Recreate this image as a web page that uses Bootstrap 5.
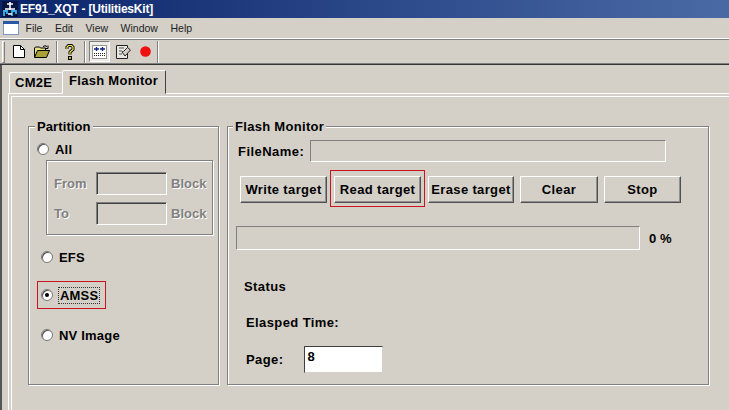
<!DOCTYPE html>
<html lang="en">
<head>
<meta charset="UTF-8">
<title>EF91_XQT - [UtilitiesKit]</title>
<link href="https://cdn.jsdelivr.net/npm/bootstrap@5.3.0/dist/css/bootstrap.min.css" rel="stylesheet">
<style>
html, body { margin: 0; height: 410px; overflow: hidden; background: #d4d0c8; }
body { font-family: "Liberation Sans", Arial, sans-serif; font-size: 12px; color: #000; line-height: 1; }
.win-title { height: 18px; background: linear-gradient(90deg, #0a246a, #4a6aa5); color: #fff; font-weight: 700; font-size: 12px; letter-spacing: -.2px; padding-left: 2px; gap: 2px; }
.win-menu { height: 20px; padding-left: 2px; gap: 12.5px; }
.win-menu span { font-size: 10.500px; color: #222; }
.win-menu svg { margin-right: -7px; }
.win-tools { height: 27px; border-top: 1px solid #fff; border-bottom: 1px solid #333; box-shadow: inset 0 1px 0 #808080, inset 0 -1px 0 #808080; padding-left: 2px; }
.tool-btn { width: 22px; height: 21px; }
.tool-w23 { width: 23px; }
.tool-btn.on { width: 21px; background-color: #eeece8; background-image: radial-gradient(#d4d0c8 35%, transparent 40%); background-size: 2px 2px; border: 1px solid; border-color: #808080 #fff #fff #808080; margin-right: 2px; }
.tool-sep { width: 2px; height: 22px; border-left: 1px solid #808080; border-right: 1px solid #fff; margin-left: 3px; }
.tool-gap { margin-right: 3px; }
.tool-end { margin-left: 1px; }
.tool-grip { width: 3px; height: 22px; border: 1px solid; border-color: #fff #808080 #808080 #fff; margin-right: 3px; }
.win-client { height: 345px; border-left: 2px solid #555; padding: 5px 0 0 6px; }
.tab-strip { height: 23px; padding-left: 1px; }
.tab-item { font-weight: 700; font-size: 13px; letter-spacing: .3px; background: #d4d0c8; border: 1px solid; border-color: #fff #404040 transparent #fff; border-radius: 2px 2px 0 0; padding: 0 5px; }
.tab-back { height: 21px; width: 53px; border-right: 0; }
.tab-front { height: 24px; width: 104px; padding: 0 6px 3px; position: relative; z-index: 1; margin-bottom: -1px; }
.tab-page { height: 320px; margin-right: -10px; border: 1px solid; border-color: #fff #808080 #808080 #fff; padding: 32px 0 0 19px; gap: 8px; box-shadow: inset 2px 2px 0 #d4d0c8, inset 3px 3px 0 #fff; }
.etched { border: 1px solid #808080; box-shadow: 1px 1px 0 #fff, inset 1px 1px 0 #fff; position: relative; }
.etched > .etch-title { position: absolute; top: -7px; left: 6px; background: #d4d0c8; padding: 0 2px; font-weight: 700; font-size: 13px; letter-spacing: .1px; }
.flash-box > .etch-title { left: 5px; letter-spacing: .3px; }
.part-box { width: 191px; height: 259px; padding: 14px 0 0 8px; }
.flash-box { width: 482px; height: 259px; padding: 13px 0 0 8px; }
.radio-row { gap: 6px; font-weight: 700; font-size: 13px; height: 16px; letter-spacing: .2px; }
.win-radio { width: 12px; height: 12px; border-radius: 50%; background: #fff; border: 1px solid #777; box-shadow: inset 1px 1px 0 #555; position: relative; flex: none; }
.win-radio.sel::after { content: ""; position: absolute; left: 3px; top: 3px; width: 4px; height: 4px; background: #000; border-radius: 50%; }
.range-box { width: 167px; height: 75px; margin: 3px 0 14px 9px; padding: 11px 0 0 7px; gap: 7px; }
.range-row { gap: 4px; font-weight: 700; font-size: 13px; color: #808080; text-shadow: 1px 1px 0 #fff; }
.range-row label { width: 38px; margin: 0; }
.sunk { border: 1px solid; border-color: #808080 #fff #fff #808080; background: #d4d0c8; }
.range-input { width: 71px; height: 23px; box-shadow: inset 1px 1px 0 #404040; }
.amss-mark { width: 69px; height: 28px; margin: 16px 0 18px 0; padding-left: 3px; border: 1px solid #c8141c; }
.amss-mark .focus-txt { outline: 1px dotted #333; padding: 1px; }
.file-row { gap: 6px; font-weight: 700; font-size: 13px; padding-left: 2px; height: 22px; letter-spacing: .45px; }
.file-input { width: 356px; height: 22px; }
.btn-row { margin: 14px 0 0 4px; gap: 6px; align-items: flex-start; }
.win-btn { height: 27px; width: 87px; display: flex; align-items: center; justify-content: center; font-weight: 700; font-size: 13px; letter-spacing: .35px; background: #d4d0c8; border: 1px solid; border-color: #fff #505050 #505050 #fff; box-shadow: inset -1px -1px 0 #909090; flex: none; }
.read-mark { border: 1px solid #c8141c; padding: 5px 3px 3px; margin: -6px -3px -4px; width: 95px; height: 37px; flex: none; }
.w86 { width: 86px; }
.w78 { width: 78px; }
.w77 { width: 77px; }
.prog-row { margin-top: 23px; gap: 9px; font-weight: 700; font-size: 13px; letter-spacing: .1px; }
.prog-track { width: 404px; height: 24px; }
.status-txt { font-weight: 700; font-size: 13px; letter-spacing: .4px; }
.status-one { margin: 30px 0 0 8px; }
.status-two { margin: 23px 0 0 10px; }
.page-row { margin: 17px 0 0 10px; gap: 21px; }
.page-input { width: 79px; height: 27px; background: #fff; border: 1px solid; border-color: #404040 #d4d0c8 #d4d0c8 #404040; padding: 3px 2px; font-weight: 700; font-size: 13px; }
</style>
</head>
<body>
<div class="win-title d-flex align-items-center">
  <svg width="16" height="16" viewBox="0 0 16 16"><rect width="16" height="16" fill="#0a1440"/><path d="M8 1v8M5 3h6M3 8h10" stroke="#fff" stroke-width="1.600" fill="none"/><path d="M2 15v-5h3v3M10 15v-5h4v3" stroke="#38b4e8" stroke-width="1.800" fill="none"/><path d="M6 13h4" stroke="#fff" stroke-width="1.500"/></svg>
  <span>EF91_XQT - [UtilitiesKit]</span>
</div>
<div class="win-menu d-flex align-items-center">
  <svg width="18" height="16" viewBox="0 0 18 16"><rect x="1.500" y="1.500" width="15" height="13" fill="#fff" stroke="#7a98c8"/><rect x="1" y="1" width="16" height="3" fill="#2a56a8"/></svg>
  <span>File</span><span>Edit</span><span>View</span><span>Window</span><span>Help</span>
</div>
<div class="win-tools d-flex align-items-center">
  <div class="tool-grip"></div>
  <div class="tool-btn d-flex align-items-center justify-content-center">
    <svg width="12" height="13" viewBox="0 0 12 13"><path d="M.5.500h7l4 4v8h-11z" fill="#fff" stroke="#000"/><path d="M7.500.5v4h4" fill="none" stroke="#000"/></svg>
  </div>
  <div class="tool-btn tool-w23 d-flex align-items-center justify-content-center">
    <svg width="16" height="13" viewBox="0 0 16 13"><path d="M.5 12V3l1-1h4l1 1h5v2" fill="#e8e080" stroke="#000"/><path d="M.5 12.500l3-7h12l-3 7z" fill="#a8a038" stroke="#000"/><path d="M9 1.500q2-1.500 4 0M14 .5v3h-3" fill="none" stroke="#000"/></svg>
  </div>
  <div class="tool-sep"></div>
  <div class="tool-btn tool-w23 d-flex align-items-center justify-content-center">
    <svg width="10" height="16" viewBox="0 0 10 16"><path d="M2 5V3l1.500-1.500h3L8 3v2.500L5 8v2.500" fill="none" stroke="#000" stroke-width="3"/><path d="M2 5V3l1.500-1.500h3L8 3v2.500L5 8v2.500" fill="none" stroke="#f4e850" stroke-width="1.200"/><rect x="3.500" y="12.500" width="3" height="3" fill="#c8b820" stroke="#000"/></svg>
  </div>
  <div class="tool-sep tool-gap"></div>
  <div class="tool-btn on d-flex align-items-center justify-content-center">
    <svg width="15" height="14" viewBox="0 0 15 14"><rect x=".5" y=".5" width="14" height="13" fill="#fff" stroke="#333" stroke-dasharray="1 1"/><path d="M2 4h5M4.500 2v4M8 4h5M10.500 2v4" stroke="#102080" stroke-width="1.300"/><path d="M2 8.500h11M2 10.500h11" stroke="#222" stroke-dasharray="1 1"/></svg>
  </div>
  <div class="tool-btn d-flex align-items-center justify-content-center">
    <svg width="15" height="14" viewBox="0 0 15 14"><path d="M.5.500h11v13H.5z" fill="#e8e6e0" stroke="#222"/><path d="M3 3h5M3 6h3M3 9h3" stroke="#555"/><path d="M6 7l3 4 5.500-6-3-2.500-4 4z" fill="#d4d0c8" stroke="#222"/></svg>
  </div>
  <div class="tool-btn d-flex align-items-center justify-content-center">
    <svg width="11" height="11" viewBox="0 0 11 11"><circle cx="5.500" cy="5.500" r="5.300" fill="#f01010"/></svg>
  </div>
  <div class="tool-sep tool-end"></div>
</div>
<div class="win-client">
  <div class="tab-strip d-flex align-items-end">
    <div class="tab-item tab-back d-flex align-items-center">CM2E</div>
    <div class="tab-item tab-front d-flex align-items-center">Flash Monitor</div>
  </div>
  <div class="tab-page d-flex align-items-start">
    <div class="etched part-box">
      <div class="etch-title">Partition</div>
      <div class="radio-row d-flex align-items-center"><span class="win-radio"></span>All</div>
      <div class="etched range-box d-flex flex-column">
        <div class="range-row d-flex align-items-center"><label>From</label><div class="sunk range-input"></div><span>Block</span></div>
        <div class="range-row d-flex align-items-center"><label>To</label><div class="sunk range-input"></div><span>Block</span></div>
      </div>
      <div class="radio-row d-flex align-items-center ps-1"><span class="win-radio"></span>EFS</div>
      <div class="amss-mark radio-row d-flex align-items-center"><span class="win-radio sel"></span><span class="focus-txt">AMSS</span></div>
      <div class="radio-row d-flex align-items-center ps-1"><span class="win-radio"></span>NV Image</div>
    </div>
    <div class="etched flash-box">
      <div class="etch-title">Flash Monitor</div>
      <div class="file-row d-flex align-items-center"><span>FileName:</span><div class="sunk file-input"></div></div>
      <div class="btn-row d-flex">
        <div class="win-btn">Write target</div>
        <div class="read-mark"><div class="win-btn">Read target</div></div>
        <div class="win-btn w86">Erase target</div>
        <div class="win-btn w78">Clear</div>
        <div class="win-btn w77">Stop</div>
      </div>
      <div class="prog-row d-flex align-items-center"><div class="sunk prog-track"></div><span>0 %</span></div>
      <div class="status-txt status-one">Status</div>
      <div class="status-txt status-two">Elasped Time:</div>
      <div class="status-txt page-row d-flex align-items-center"><span>Page:</span><div class="page-input">8</div></div>
    </div>
  </div>
</div>
</body>
</html>
